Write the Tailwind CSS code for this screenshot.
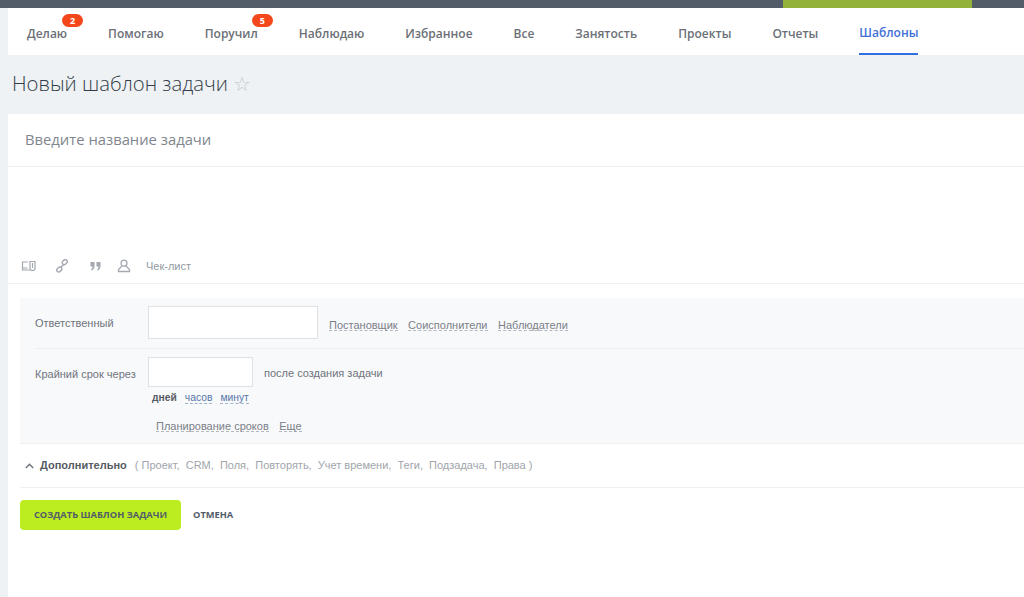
<!DOCTYPE html>
<html lang="ru">
<head>
    <meta charset="UTF-8">
    <title>Новый шаблон задачи</title>
    <script src="https://cdn.jsdelivr.net/npm/@tailwindcss/browser@4"></script>
</head>
<body class="bg-[#eef2f4] h-[597px] overflow-hidden flex flex-col font-['Liberation_Sans',sans-serif]">
    <!-- Top bar -->
    <div class="h-2 bg-[#535c69] flex justify-end shrink-0">
        <div class="w-[189px] mr-[52px] bg-[#93b23a]"></div>
    </div>

    <div class="pl-2 flex flex-col flex-1">
        <!-- Tabs -->
        <nav class="h-[47px] bg-white flex gap-[41px] pl-[19px] font-['Open_Sans',sans-serif] text-[12px] font-semibold text-[#6b7076] shrink-0">
            <a class="relative h-full flex items-center pt-1">Делаю
                <span class="absolute left-[35px] top-[6px] w-[21px] h-[13px] rounded-full bg-[#f4471c] text-white text-[9px] font-bold leading-[13px] text-center">2</span>
            </a>
            <a class="h-full flex items-center pt-1">Помогаю</a>
            <a class="relative h-full flex items-center pt-1">Поручил
                <span class="absolute left-[47px] top-[6px] w-[21px] h-[13px] rounded-full bg-[#f4471c] text-white text-[9px] font-bold leading-[13px] text-center">5</span>
            </a>
            <a class="h-full flex items-center pt-1">Наблюдаю</a>
            <a class="h-full flex items-center pt-1">Избранное</a>
            <a class="h-full flex items-center pt-1">Все</a>
            <a class="h-full flex items-center pt-1">Занятость</a>
            <a class="h-full flex items-center pt-1">Проекты</a>
            <a class="h-full flex items-center pt-1">Отчеты</a>
            <a class="h-full flex items-center pt-1 text-[#3f6fd8] border-b-2 border-[#2f6fe0]">Шаблоны</a>
        </nav>

        <!-- Title -->
        <div class="h-[59px] flex items-center pl-1 gap-[5px] pb-0.5 shrink-0">
            <h1 class="font-['Open_Sans',sans-serif] font-light text-[20.3px] text-[#333c48]">Новый шаблон задачи</h1>
            <span class="text-[20px] leading-none text-[#c4c9ce]">☆</span>
        </div>

        <!-- Form -->
        <div class="bg-white flex-1">
            <div class="h-[53px] border-b border-[#eef0f2] pl-[17px] pb-0.5 flex items-center font-['Open_Sans',sans-serif] text-[14.8px] text-[#80868e]">Введите название задачи</div>

            <div class="h-[117px] border-b border-[#eef0f2] flex items-end pb-[9px] pl-[13px] text-[#a4a9b0]">
                <div class="flex items-center h-[16px]">
                    <svg class="w-[16px] h-[14px]" viewBox="0 0 16 14" fill="none" stroke="currentColor" stroke-width="1.2"><path d="M7 3H1.5v8H9M1.5 9h5"/><path d="M9 2.5h5v6.5a2.5 2.500 0 0 1-5 0z"/><path d="M11.500 4v5"/></svg>
                    <svg class="w-[14px] h-[14px] ml-[18px]" viewBox="0 0 14 14" fill="none" stroke="currentColor" stroke-width="1.4"><rect x="7" y="1.2" width="5.5" height="4" rx="2" transform="rotate(-45 9.7 3.2)"/><rect x="1.5" y="8.5" width="5.5" height="4" rx="2" transform="rotate(-45 4.3 10.5)"/><path d="M5.500 8.500l3-3"/></svg>
                    <svg class="w-[11px] h-[10px] ml-[21px]" viewBox="0 0 11 10" fill="currentColor"><path d="M0.5 1h4v4c0 2.200-1 3.500-3 4.500l-.6-1C2 7.800 2.500 7 2.500 5.500h-2z"/><path d="M6.500 1h4v4c0 2.200-1 3.500-3 4.500l-.6-1C8 7.800 8.500 7 8.500 5.500h-2z"/></svg>
                    <svg class="w-[14px] h-[14px] ml-[16px]" viewBox="0 0 14 14" fill="none" stroke="currentColor" stroke-width="1.300"><circle cx="7" cy="4.200" r="3"/><path d="M5 7L1.500 10.500v2h11v-2L9 7"/></svg>
                    <span class="ml-[15px] text-[11px] text-[#94999f]">Чек-лист</span>
                </div>
            </div>

            <!-- Settings panel -->
            <div class="ml-3 mt-[14px] bg-[#f8f9fb] border-b border-[#eef0f2] h-[146px] text-[11px] text-[#6f747b]">
                <div class="ml-[15px] h-[51px] border-b border-[#eceef0] flex">
                    <label class="w-[113px] pt-[17px]">Ответственный</label>
                    <input class="mt-2 w-[170px] h-[33px] bg-white border border-[#dfe2e5]">
                    <div class="flex gap-[10.5px] ml-[11px] pt-[19px] h-[35px] text-[#7b8088]">
                        <span class="h-[14px] border-b border-dashed border-[#b5b9bf]">Постановщик</span>
                        <span class="h-[14px] border-b border-dashed border-[#b5b9bf]">Соисполнители</span>
                        <span class="h-[14px] border-b border-dashed border-[#b5b9bf]">Наблюдатели</span>
                    </div>
                </div>
                <div class="ml-[15px] flex pt-2">
                    <label class="w-[113px] pt-[9px]">Крайний срок через</label>
                    <div class="w-[105px]">
                        <input class="block w-[105px] h-[30px] bg-white border border-[#dfe2e5]">
                        <div class="flex gap-2 pl-1 mt-[3px] text-[10.3px]">
                            <b class="font-bold text-[#555b62]">дней</b>
                            <span class="text-[#5577a8] border-b border-dashed border-[#9fb3cf] h-[14px]">часов</span>
                            <span class="text-[#5577a8] border-b border-dashed border-[#9fb3cf] h-[14px]">минут</span>
                        </div>
                        <div class="flex gap-[10.5px] pl-2 mt-[13px] whitespace-nowrap text-[#7b8088]">
                            <span class="h-[14px] border-b border-dashed border-[#b5b9bf]">Планирование сроков</span>
                            <span class="h-[14px] border-b border-dashed border-[#b5b9bf]">Еще</span>
                        </div>
                    </div>
                    <span class="ml-[11px] pt-2">после создания задачи</span>
                </div>
            </div>

            <!-- Additional -->
            <div class="ml-3 h-[44px] border-b border-[#eef0f2] flex items-center pl-[5px] text-[11px] text-[#a0a5ab]">
                <svg class="w-[9px] h-[6px] mr-[6px]" viewBox="0 0 9 6" fill="none" stroke="#6f747b" stroke-width="1.400"><path d="M.8 5l3.700-3.700L8.200 5"/></svg>
                <b class="font-bold text-[#555b62] mr-[8px]">Дополнительно</b>
                <span class="whitespace-pre">( Проект,  CRM,  Поля,  Повторять,  Учет времени,  Теги,  Подзадача,  Права )</span>
            </div>

            <!-- Buttons -->
            <div class="ml-3 mt-3 flex items-center font-['Open_Sans',sans-serif] text-[9.3px] font-bold text-[#535c69]">
                <button class="w-[161px] h-[30px] bg-[#bbed21] rounded-sm">СОЗДАТЬ ШАБЛОН ЗАДАЧИ</button>
                <button class="ml-3">ОТМЕНА</button>
            </div>
        </div>
    </div>
</body>
</html>
